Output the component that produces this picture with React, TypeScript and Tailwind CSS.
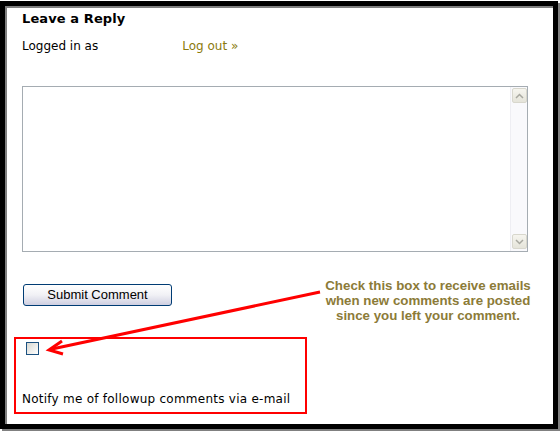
import React from "react";

export default function App() {
  const dv = { fontFamily: '"DejaVu Sans", Verdana, sans-serif' } as React.CSSProperties;
  return (
    <div className="relative w-[560px] h-[431px] bg-white pt-px overflow-hidden">
      <div
        className="w-[558px] h-[428px] border-[5px] border-black shadow-[2px_2px_0_#808080,inset_2px_2px_0_#808080] pl-[17px] pt-[5px] text-black"
        style={dv}
      >
        <h2 className="text-[13px] font-bold leading-[16px] tracking-[0.1px]">Leave a Reply</h2>
        <div className="mt-[11px] flex text-[12px] leading-[16px]">
          <span>Logged in as</span>
          <a className="ml-[84px] text-[#8b7a0c]">Log out »</a>
        </div>
        <div className="mt-[32px] flex w-[506px] h-[166px] border border-[#a5acb2] bg-white">
          <textarea className="flex-1 resize-none outline-none bg-white" />
          <div className="w-[17px] h-full bg-[#f9f9fc] border-l border-[#eeeef3] flex flex-col justify-between p-px pb-[2px]">
            <div className="w-[15px] h-[15px] rounded-[2px] border border-[#d8d7cd] bg-gradient-to-b from-[#f6f5ef] to-[#e5e4da] flex items-center justify-center">
              <svg width="9" height="6" viewBox="0 0 9 6">
                <path d="M1 5 L4.5 1.5 L8 5" fill="none" stroke="#a8a8a0" strokeWidth="1.5" />
              </svg>
            </div>
            <div className="w-[15px] h-[15px] rounded-[2px] border border-[#d8d7cd] bg-gradient-to-b from-[#f6f5ef] to-[#e5e4da] flex items-center justify-center">
              <svg width="9" height="6" viewBox="0 0 9 6">
                <path d="M1 1 L4.5 4.5 L8 1" fill="none" stroke="#a8a8a0" strokeWidth="1.5" />
              </svg>
            </div>
          </div>
        </div>
        <button
          className="mt-[32px] ml-px w-[149px] h-[22px] rounded-[3px] border border-[#003c74] bg-gradient-to-b from-white via-[#f1f1f5] to-[#cfcfe1] text-[13px] leading-[20px] text-black flex items-center justify-center"
          style={{ fontFamily: '"Liberation Sans", Arial, sans-serif' }}
        >
          Submit Comment
        </button>
        <div className="mt-[31px] ml-[-8px] w-[293px] h-[77px] border-2 border-[#ff0000] pl-[6px]">
          <div className="mt-[3px] ml-[4px] w-[13px] h-[13px] border border-[#1c5180] bg-gradient-to-br from-[#d8d8d2] to-white" />
          <div className="mt-[36px] text-[12px] leading-[16px] tracking-[0.25px]">
            Notify me of followup comments via e-mail
          </div>
        </div>
      </div>

      <div
        className="absolute left-[317px] top-[278px] w-[222px] text-center text-[13.3px] leading-[15px] font-bold text-[#8c7b38]"
        style={{ fontFamily: '"Liberation Sans", Arial, sans-serif' }}
      >
        Check this box to receive emails
        <br />
        when new comments are posted
        <br />
        since you left your comment.
      </div>

      <svg className="absolute left-0 top-0 pointer-events-none" width="560" height="431" viewBox="0 0 560 431">
        <line x1="320" y1="292" x2="52" y2="349" stroke="#ff0000" strokeWidth="3" />
        <polyline points="62,341 49,350 63,354" fill="none" stroke="#ff0000" strokeWidth="3" strokeLinejoin="miter" />
      </svg>
    </div>
  );
}
